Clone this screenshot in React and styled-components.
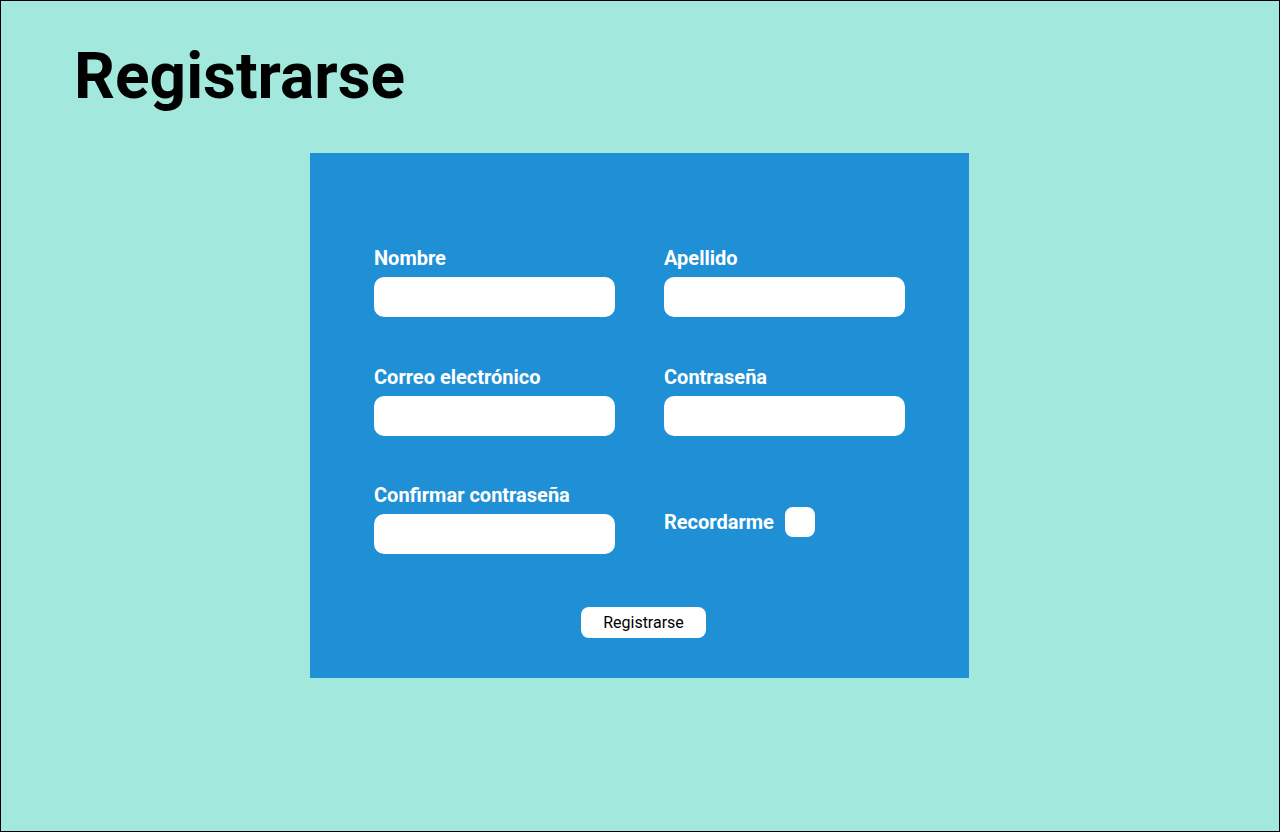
import styled, { createGlobalStyle } from "styled-components"

const EstiloGlobal = createGlobalStyle`
    * {
        box-sizing: border-box;
    }
    body {
        margin: 0;
        font-family: Roboto, "Liberation Sans", sans-serif;
    }
`

const Pagina = styled.main`
    min-height: 832px;
    width: 1280px;
    border: 1px solid #000;
    background: #A2E8DC;
    padding-top: 38px;
`

const Titulo = styled.h1`
    margin: 0 0 39px 73px;
    font-family: Roboto, sans-serif;
    font-size: 64px;
    font-weight: 700;
    line-height: 75px;
    color: #000;
`

const Tarjeta = styled.form`
    width: 659px;
    margin: 0 0 0 309px;
    background: #1F90D6;
    padding: 93px 64px 40px;
    display: flex;
    flex-direction: column;
    align-items: center;
`

const Grilla = styled.div`
    display: grid;
    grid-template-columns: 241px 241px;
    column-gap: 49px;
    row-gap: 47.5px;
`

const Campo = styled.label`
    display: flex;
    flex-direction: column;
    gap: 7px;
`

const Etiqueta = styled.span`
    color: #FFF;
    font-family: Roboto, sans-serif;
    font-size: 20px;
    font-weight: 700;
    line-height: 24px;
`

const Entrada = styled.input`
    display: block;
    width: 241px;
    height: 40px;
    border: none;
    border-radius: 10px;
    background: #FFF;
    padding: 0 12px;
    font-family: Roboto, sans-serif;
    font-size: 16px;
    outline: none;
`

const Recordar = styled.label`
    display: flex;
    align-items: center;
    gap: 11px;
    padding-top: 6px;
`

const Casilla = styled.input`
    appearance: none;
    margin: 0;
    width: 30px;
    height: 30px;
    border-radius: 8px;
    background: #FFF;
`

const Boton = styled.button`
    margin: 53px 0 0 8px;
    width: 125px;
    height: 31px;
    border: none;
    border-radius: 8px;
    background: #FFF;
    color: #000;
    font-family: Roboto, sans-serif;
    font-size: 16px;
    font-weight: 400;
    cursor: pointer;
`

const campos = [
    { nombre: "nombre", texto: "Nombre", tipo: "text" },
    { nombre: "apellido", texto: "Apellido", tipo: "text" },
    { nombre: "correo", texto: "Correo electrónico", tipo: "email" },
    { nombre: "contrasena", texto: "Contraseña", tipo: "password" },
    { nombre: "confirmar", texto: "Confirmar contraseña", tipo: "password" },
]

const App = () => {
    return (
        <>
            <EstiloGlobal />
            <Pagina>
                <Titulo>Registrarse</Titulo>
                <Tarjeta onSubmit={(e) => e.preventDefault()}>
                    <Grilla>
                        {campos.map((campo) => (
                            <Campo key={campo.nombre}>
                                <Etiqueta>{campo.texto}</Etiqueta>
                                <Entrada type={campo.tipo} name={campo.nombre} />
                            </Campo>
                        ))}
                        <Recordar>
                            <Etiqueta>Recordarme</Etiqueta>
                            <Casilla type="checkbox" />
                        </Recordar>
                    </Grilla>
                    <Boton type="submit">Registrarse</Boton>
                </Tarjeta>
            </Pagina>
        </>
    )
}

export default App
